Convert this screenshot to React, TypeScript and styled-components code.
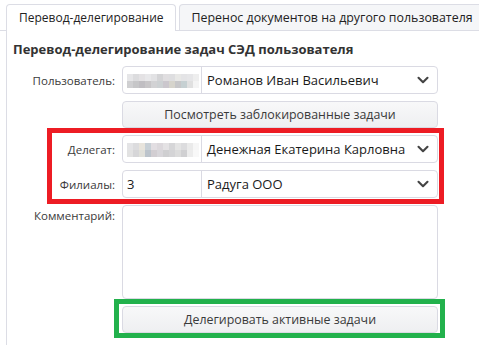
import styled, { createGlobalStyle } from "styled-components";
import { ChevronDown } from "lucide-react";

const GlobalStyle = createGlobalStyle`
  body {
    margin: 0;
    background: #fff;
    font-family: "Open Sans", "Noto Sans", sans-serif;
    font-size: 12px;
    color: #333;
  }
`;

const Page = styled.div`
  width: 479px;
  height: 345px;
  overflow: hidden;
`;

const TabBar = styled.div`
  display: flex;
  gap: 3px;
  padding: 4px 0 0 6px;
  border-bottom: 1px solid #dcdde5;
  white-space: nowrap;
`;

const Tab = styled.div<{ active?: boolean }>`
  flex-shrink: 0;
  line-height: 25px;
  padding: 0 11px 0 12px;
  border: 1px solid #dcdde5;
  border-bottom: none;
  border-radius: 4px 4px 0 0;
  margin-bottom: ${(p) => (p.active ? "-1px" : "0")};
  background: ${(p) => (p.active ? "#fff" : "#f5f6f8")};
  height: ${(p) => (p.active ? "26px" : "25px")};
  color: #222;
  font-size: ${(p) => (p.active ? "12px" : "12.4px")};
`;

const Panel = styled.div`
  margin-left: 6px;
  border-left: 1px solid #dcdde5;
  padding: 9px 0 20px 6px;
`;

const Heading = styled.div`
  font-weight: 700;
  font-size: 13px;
  color: #333;
  margin-bottom: 8px;
`;

const Form = styled.div`
  display: flex;
  flex-direction: column;
  gap: 7px;
  width: 425px;
`;

const Row = styled.div`
  display: grid;
  grid-template-columns: 102px 316px;
  column-gap: 7px;
`;

const Label = styled.div<{ top?: boolean }>`
  text-align: right;
  color: #3a3a3a;
  font-size: 11.5px;
  white-space: nowrap;
  align-self: ${(p) => (p.top ? "start" : "center")};
  padding-top: ${(p) => (p.top ? "3px" : "0")};
`;

const Select = styled.div`
  display: flex;
  height: 28px;
  box-sizing: border-box;
  border: 1px solid #dadae3;
  border-radius: 4px;
  background: #fff;
  color: #1a1a1a;
  font-size: 13px;
  white-space: nowrap;
`;

const Code = styled.div`
  width: 79px;
  flex-shrink: 0;
  border-right: 1px solid #dadae3;
  display: flex;
  align-items: center;
  padding-left: 4px;
  box-sizing: border-box;
`;

const Value = styled.div`
  flex: 1;
  display: flex;
  align-items: center;
  justify-content: space-between;
  padding: 0 5px 0 5px;
  svg {
    color: #444;
  }
`;

const Pixels = styled.div`
  display: grid;
  grid-template-columns: repeat(12, 6px);
  grid-auto-rows: 7px;
  margin-top: 2px;
`;

const Pixel = styled.div<{ c: string }>`
  background: ${(p) => p.c};
`;

const Button = styled.div`
  height: 27px;
  box-sizing: border-box;
  border: 1px solid #dadae3;
  border-radius: 4px;
  background: linear-gradient(#f8f8f9, #eeeff1);
  display: flex;
  align-items: center;
  justify-content: center;
  color: #3a3a3a;
  font-size: 12.4px;
`;

const TextArea = styled.div`
  height: 94px;
  box-sizing: border-box;
  border: 1px solid #dadae3;
  border-radius: 4px;
  background: #fff;
`;

const Highlight = styled.div<{ color: string; inset: string }>`
  position: relative;
  display: flex;
  flex-direction: column;
  gap: 7px;
  &::after {
    content: "";
    position: absolute;
    inset: ${(p) => p.inset};
    border: 5px solid ${(p) => p.color};
    pointer-events: none;
  }
`;

const blurA = [
  "#e6e6e8", "#dcdcde", "#e4e2e4", "#e8e8ea", "#e2e2e4", "#d4d4d6", "#e0dee0", "#dedee0", "#e8e8e6", "#e4e4e6", "#e6e6e8", "#eeeeee",
  "#cfcfd1", "#c6c6c8", "#c0bec2", "#c8c6c8", "#d2d2d4", "#cdd1d3", "#cbc7cd", "#d6d4cc", "#c7c7c9", "#c6d0d2", "#e0e0e0", "#f4f4f4",
];
const blurB = [
  "#e4e4e6", "#dcdcde", "#e8e4dc", "#c8d0d6", "#e2dee2", "#dcd8dc", "#e4e2e4", "#d6d6d8", "#e4e4e4", "#dcdcde", "#eaeaea", "#f6f6f6",
  "#e2e2e2", "#d6d6d8", "#e0e0da", "#bcc4cc", "#d2ced2", "#d8d6da", "#cfcfd1", "#d4d4d6", "#dcdcdc", "#d0d0d2", "#ececec", "#f8f8f8",
];

function Blur({ cells }: { cells: string[] }) {
  return (
    <Pixels>
      {cells.map((c, i) => (
        <Pixel key={i} c={c} />
      ))}
    </Pixels>
  );
}

function App() {
  return (
    <Page>
      <GlobalStyle />
      <TabBar>
        <Tab active>Перевод-делегирование</Tab>
        <Tab>Перенос документов на другого пользователя</Tab>
      </TabBar>
      <Panel>
        <Heading>Перевод-делегирование задач СЭД пользователя</Heading>
        <Form>
          <Row>
            <Label>Пользователь:</Label>
            <Select>
              <Code>
                <Blur cells={blurA} />
              </Code>
              <Value>
                Романов Иван Васильевич
                <ChevronDown size={18} strokeWidth={2.8} />
              </Value>
            </Select>
          </Row>
          <Row>
            <span />
            <Button>Посмотреть заблокированные задачи</Button>
          </Row>
          <Highlight color="#ed1c24" inset="-7px -6px -6px 34px">
            <Row>
              <Label>Делегат:</Label>
              <Select>
                <Code>
                  <Blur cells={blurB} />
                </Code>
                <Value>
                  Денежная Екатерина Карловна
                  <ChevronDown size={18} strokeWidth={2.8} />
                </Value>
              </Select>
            </Row>
            <Row>
              <Label>Филиалы:</Label>
              <Select>
                <Code>3</Code>
                <Value>
                  Радуга ООО
                  <ChevronDown size={18} strokeWidth={2.8} />
                </Value>
              </Select>
            </Row>
          </Highlight>
          <Row>
            <Label top>Комментарий:</Label>
            <TextArea />
          </Row>
          <Row>
            <span />
            <Highlight color="#22b14c" inset="-7px -7px -5px -8px">
              <Button>Делегировать активные задачи</Button>
            </Highlight>
          </Row>
        </Form>
      </Panel>
    </Page>
  );
}

export default App;
